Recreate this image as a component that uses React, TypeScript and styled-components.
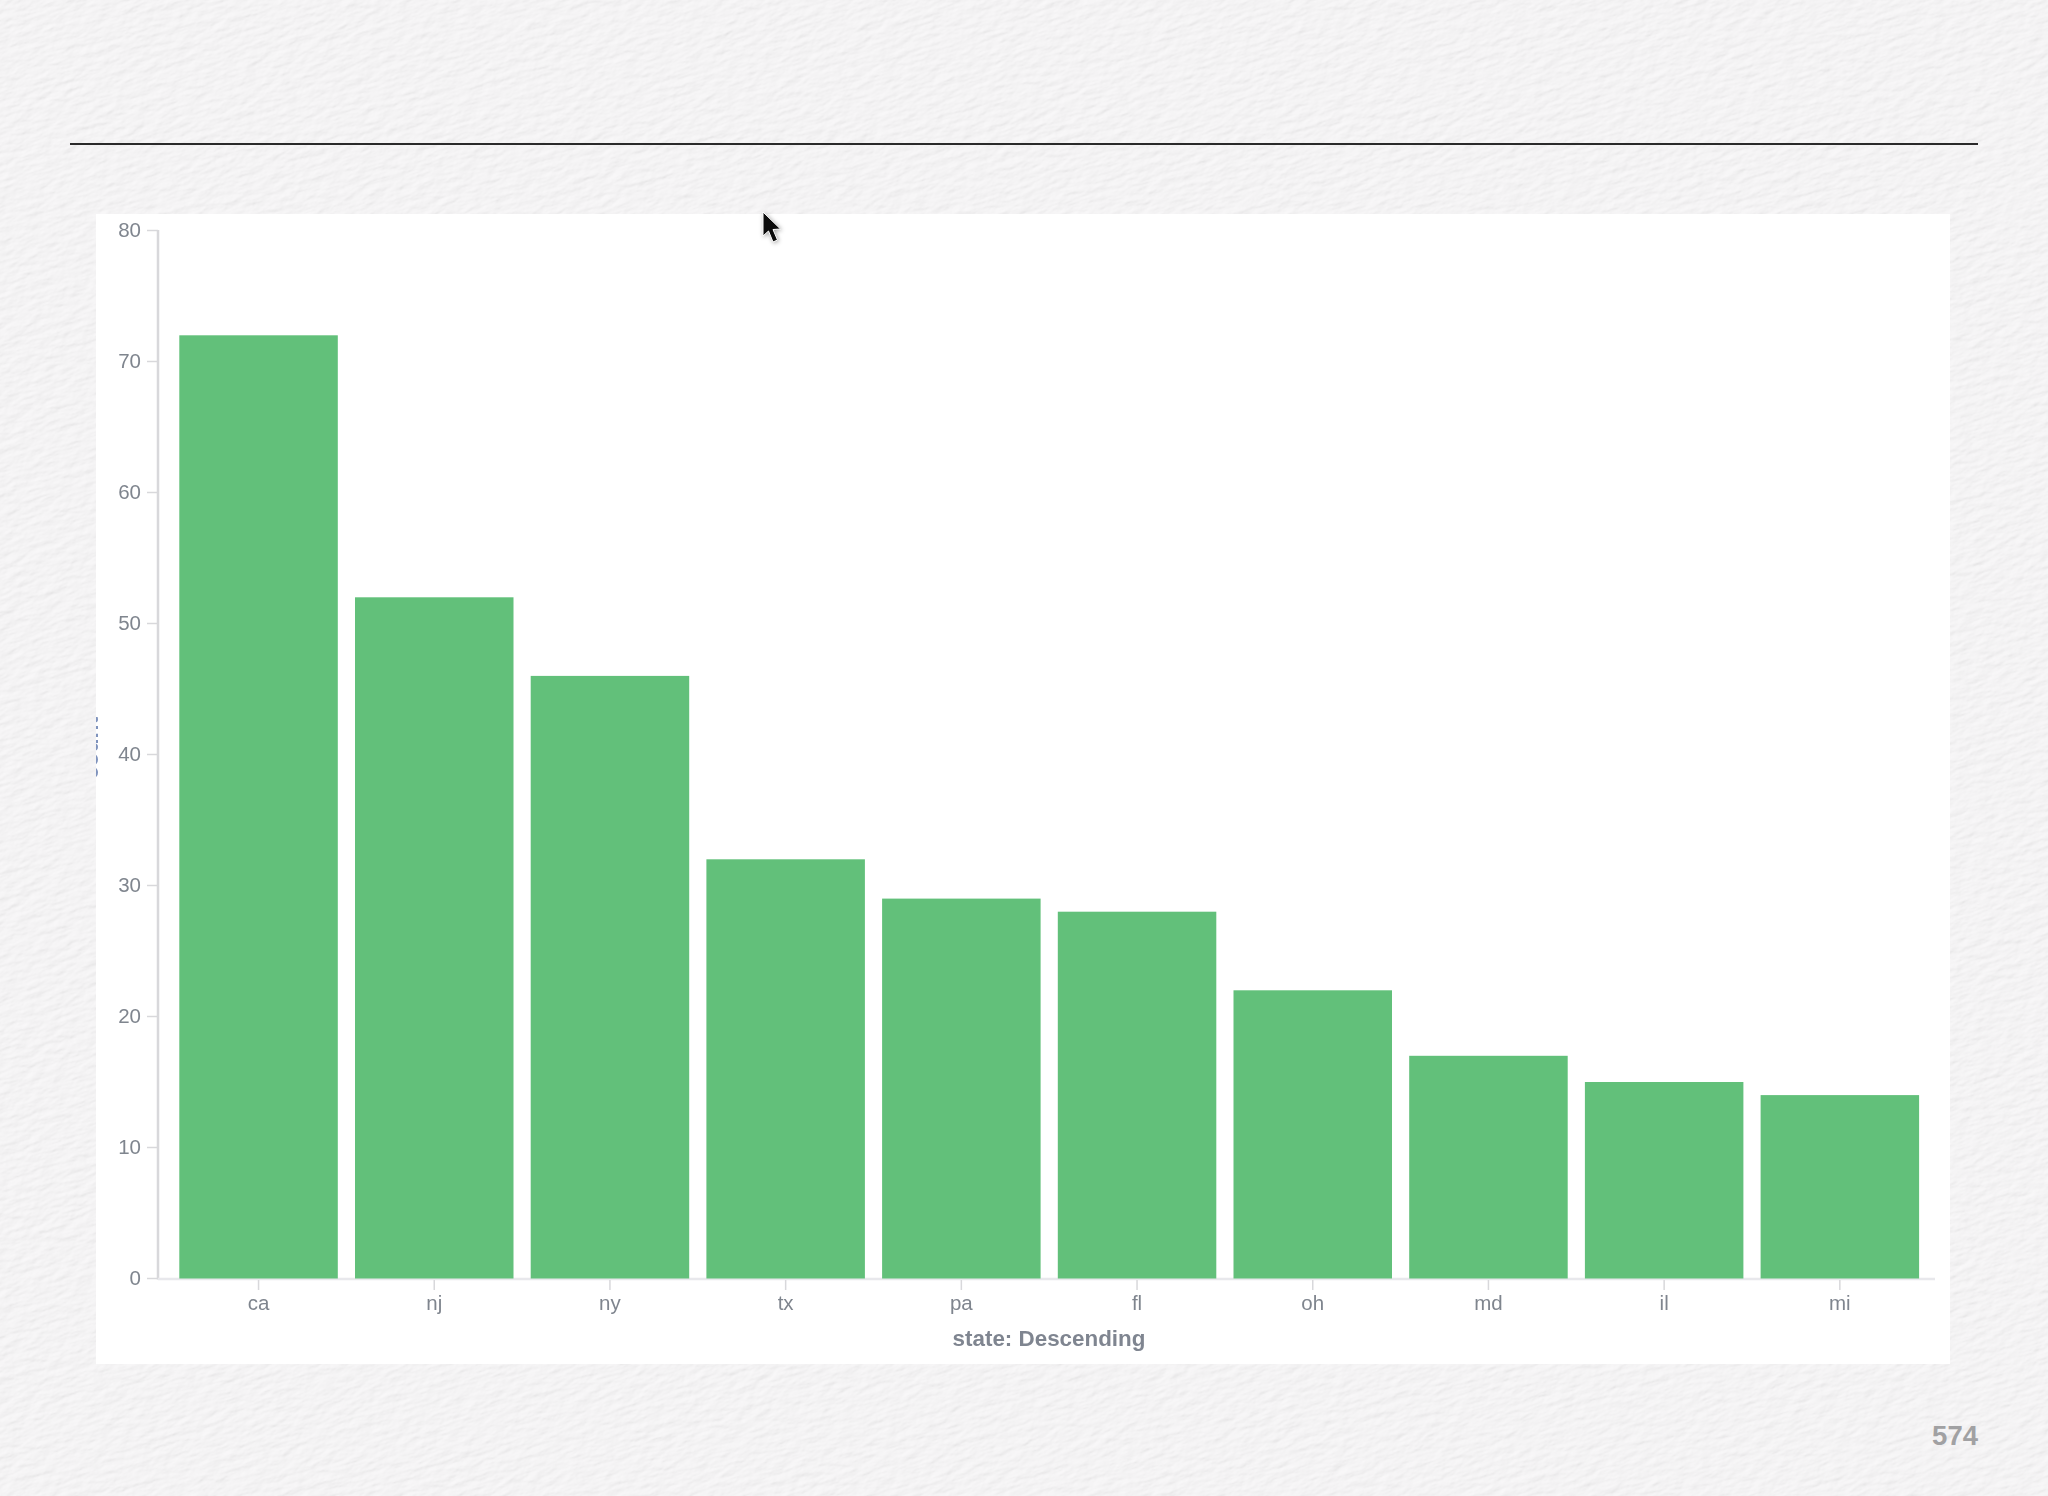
import React from "react";
import styled, { createGlobalStyle } from "styled-components";

const paper =
  "data:image/svg+xml," +
  encodeURIComponent(
    `<svg xmlns="http://www.w3.org/2000/svg" width="2048" height="1496"><filter id="p" x="0" y="0" width="100%" height="100%"><feTurbulence type="fractalNoise" baseFrequency="0.06 0.16" numOctaves="5" seed="11"/><feDiffuseLighting lighting-color="#f6f5f6" surfaceScale="0.75" diffuseConstant="1.03"><feDistantLight azimuth="235" elevation="72"/></feDiffuseLighting></filter><g transform="rotate(-16 1024 748)"><rect x="-300" y="-400" width="2648" height="2296" filter="url(#p)"/></g></svg>`
  );

const GlobalStyle = createGlobalStyle`
  html, body {
    margin: 0;
    padding: 0;
    background: #f0eff0;
  }
`;

const Page = styled.div`
  position: relative;
  width: 2048px;
  height: 1496px;
  overflow: hidden;
  padding: 143px 70px 0;
  box-sizing: border-box;
  background-color: #f0eff0;
  background-image: url("${paper}");
  font-family: "Liberation Sans", Arial, sans-serif;
`;

const Rule = styled.hr`
  margin: 0;
  border: 0;
  height: 2px;
  background: #2a2a2a;
`;

const ChartPanel = styled.section`
  width: 1854px;
  height: 1150px;
  margin: 69px 0 0 26px;
  background: #fff;
`;

const ChartSvg = styled.svg`
  display: block;
  width: 100%;
  height: 100%;
  filter: blur(0.6px);
`;

const Bar = styled.rect`
  fill: #62c07a;
`;

const AxisLine = styled.line<{ $light?: boolean }>`
  stroke: ${(p) => (p.$light ? "#e8e8ec" : "#d8d8db")};
  stroke-width: 2.5;
`;

const Tick = styled.line`
  stroke: #d8d8db;
  stroke-width: 1.5;
`;

const TickLabel = styled.text<{ $anchor: string }>`
  font-family: "Liberation Sans", Arial, sans-serif;
  font-size: 20.5px;
  fill: #7f858e;
  text-anchor: ${(p) => p.$anchor};
`;

const AxisTitle = styled.text`
  font-family: "Liberation Sans", Arial, sans-serif;
  font-size: 22.4px;
  font-weight: 700;
  fill: #7f8590;
  text-anchor: middle;
`;

const CutOffTitle = styled.text`
  font-family: "Liberation Sans", Arial, sans-serif;
  font-size: 23px;
  font-weight: 700;
  fill: #7f93bd;
  text-anchor: middle;
`;

const PageNumber = styled.div`
  margin-top: 56px;
  text-align: right;
  font-size: 27.5px;
  line-height: 32px;
  font-weight: 700;
  color: #a1a1a3;
`;

const Cursor = styled.svg`
  position: absolute;
  left: 760px;
  top: 210px;
  width: 24px;
  height: 36px;
  filter: blur(0.6px) drop-shadow(1px 1px 2px rgba(0, 0, 0, 0.35));
`;

const states = [
  { name: "ca", count: 72 },
  { name: "nj", count: 52 },
  { name: "ny", count: 46 },
  { name: "tx", count: 32 },
  { name: "pa", count: 29 },
  { name: "fl", count: 28 },
  { name: "oh", count: 22 },
  { name: "md", count: 17 },
  { name: "il", count: 15 },
  { name: "mi", count: 14 },
];

const yTicks = [0, 10, 20, 30, 40, 50, 60, 70, 80];

const baseY = 1278.5;
const unit = 13.1;
const firstBar = 179.3;
const pitch = 175.7;
const barWidth = 158.5;

const App = () => {
  return (
    <Page>
      <GlobalStyle />
      <Rule />
      <ChartPanel>
        <ChartSvg viewBox="96 214 1854 1150">
          <CutOffTitle transform="translate(98 748) rotate(-90)">count</CutOffTitle>

          {yTicks.map((t) => (
            <g key={t}>
              <Tick x1={147} x2={158} y1={baseY - t * unit} y2={baseY - t * unit} />
              <TickLabel $anchor="end" x={141} y={baseY - t * unit + 6.5}>
                {t}
              </TickLabel>
            </g>
          ))}
          <AxisLine x1={158} x2={158} y1={230} y2={1279.5} />
          <AxisLine $light x1={158} x2={1935} y1={1279} y2={1279} />

          {states.map((s, i) => {
            const x = firstBar + i * pitch;
            const h = s.count * unit;
            return (
              <g key={s.name}>
                <Bar x={x} y={baseY - h} width={barWidth} height={h} />
                <Tick x1={x + barWidth / 2} x2={x + barWidth / 2} y1={1280} y2={1290} />
                <TickLabel $anchor="middle" x={x + barWidth / 2} y={1310}>
                  {s.name}
                </TickLabel>
              </g>
            );
          })}

          <AxisTitle x={1049} y={1345.5}>
            state: Descending
          </AxisTitle>
        </ChartSvg>
      </ChartPanel>
      <PageNumber>574</PageNumber>
      <Cursor viewBox="0 0 24 36">
        <path
          d="M3 2 L3 26 L8.5 21 L13 32 L17.5 30 L13 19.5 L20.5 19 Z"
          fill="#0c0c0c"
          stroke="#fff"
          strokeWidth="1"
        />
      </Cursor>
    </Page>
  );
};

export default App;
